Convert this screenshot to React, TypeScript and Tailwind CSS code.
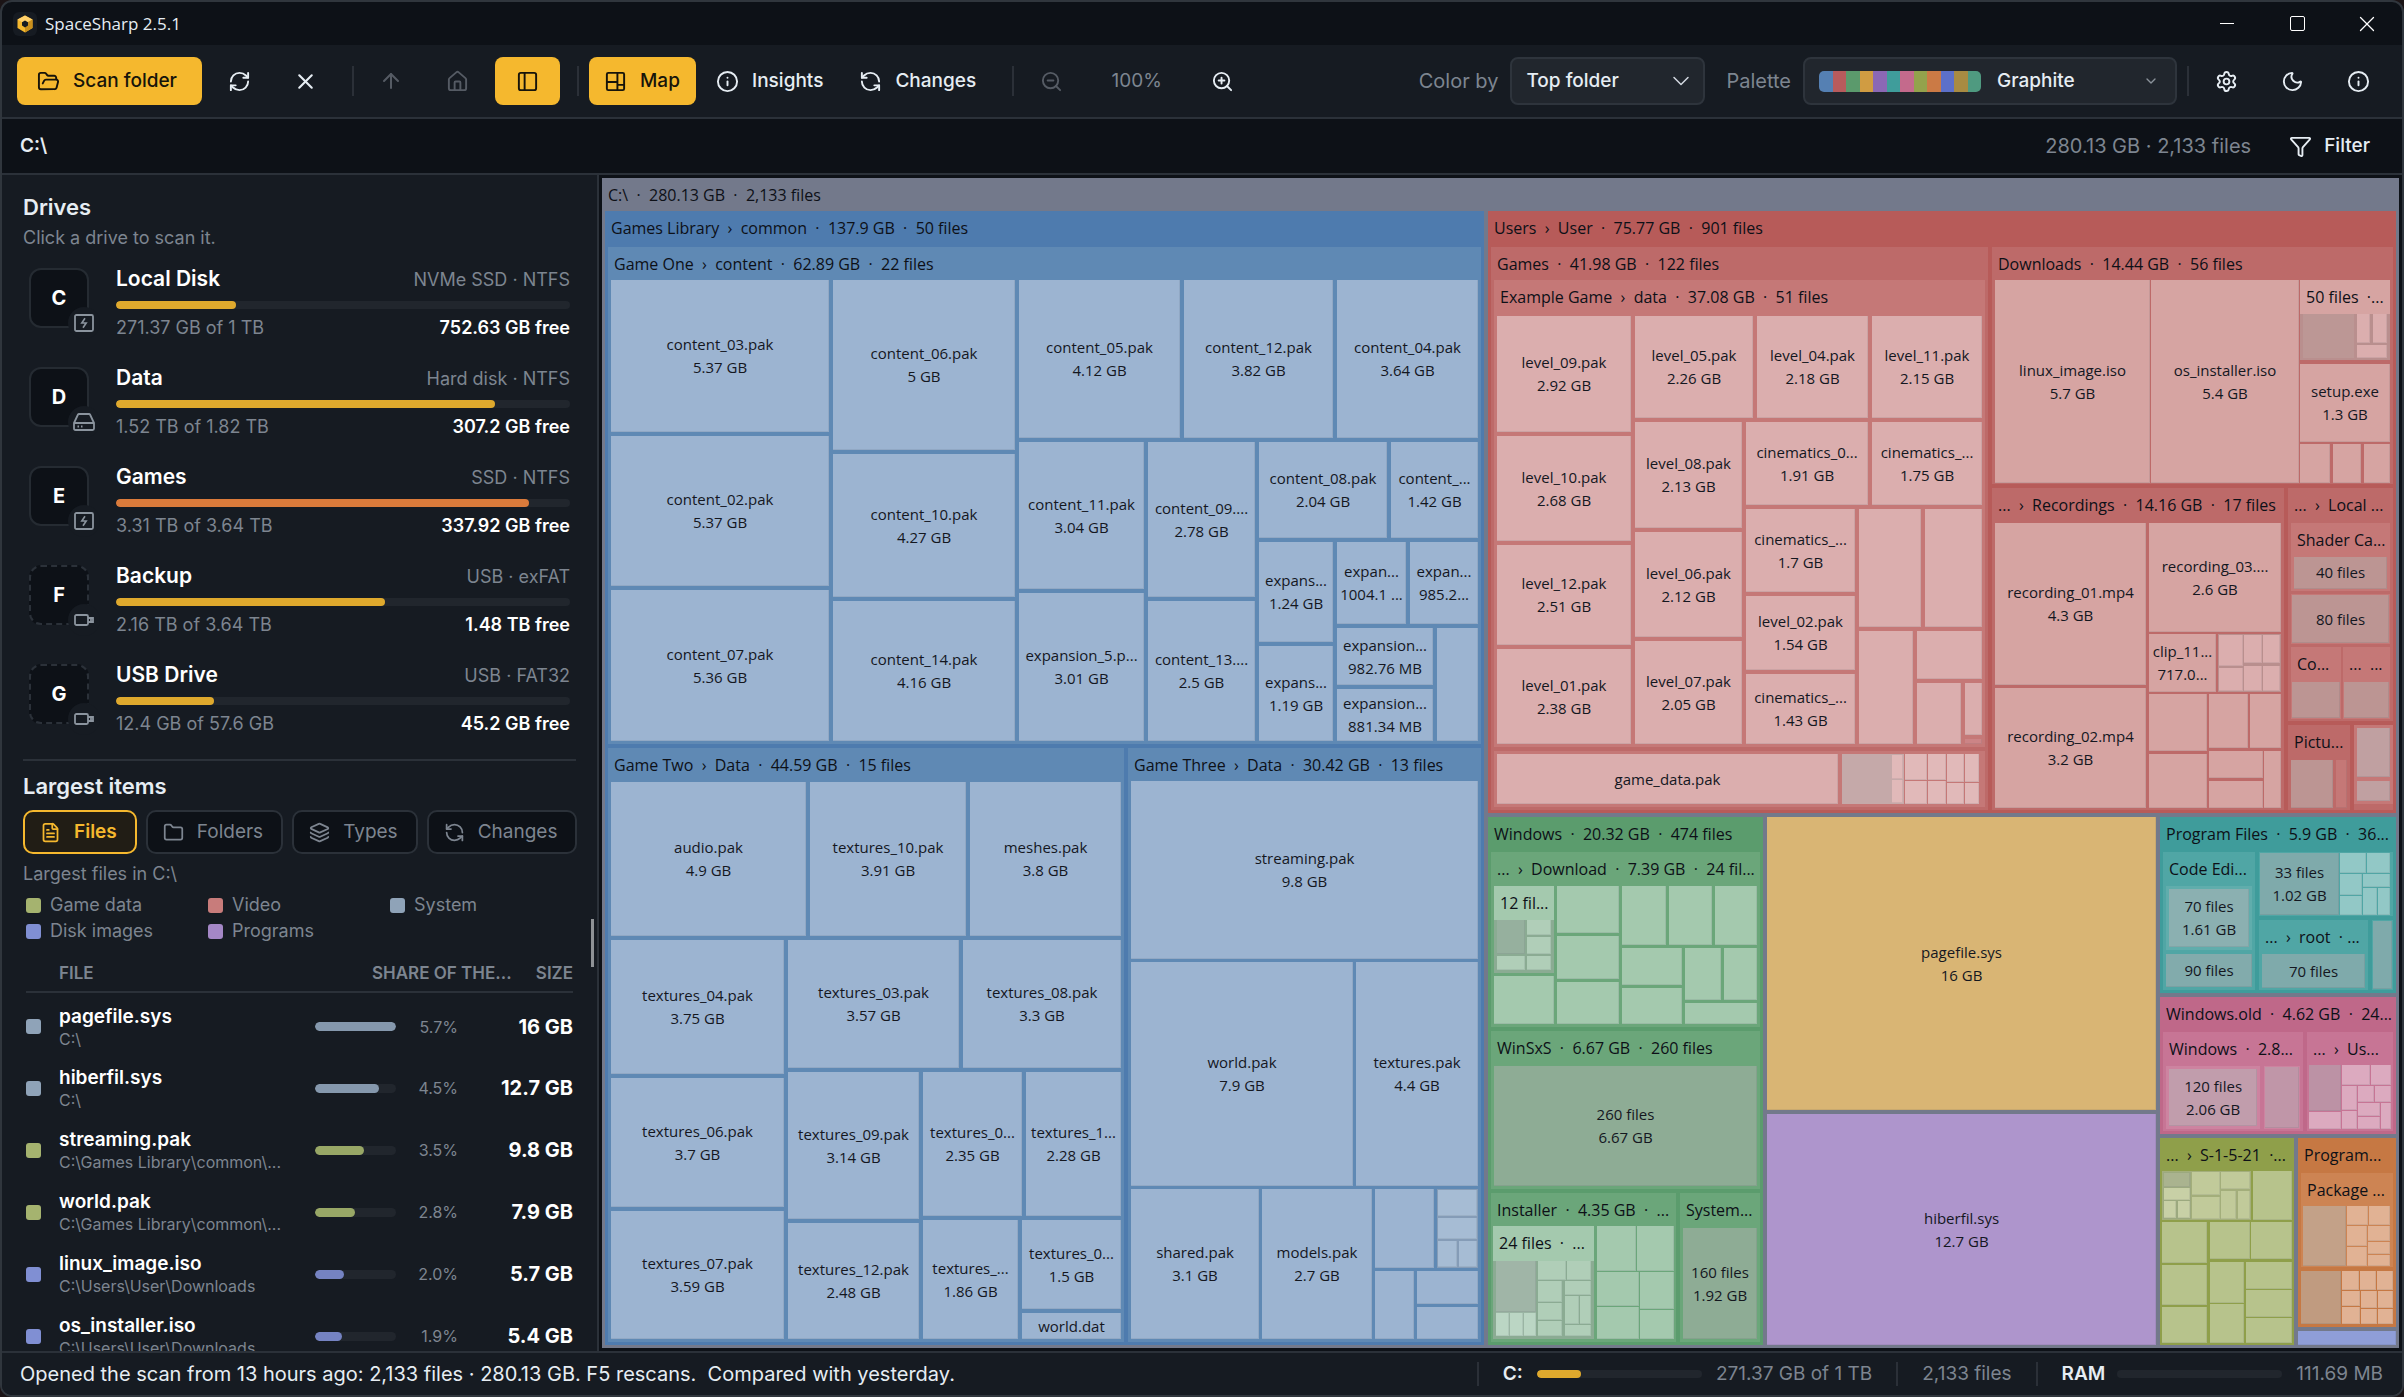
import type { ReactNode } from "react";
import {
  ArrowUp,
  ChevronDown,
  FileText,
  Folder,
  FolderOpen,
  Funnel,
  House,
  Info,
  Layers,
  Moon,
  RefreshCcw,
  RefreshCw,
  Settings,
  X,
  ZoomIn,
  ZoomOut,
} from "lucide-react";

/* ---------- treemap building blocks ---------- */

type Item = [number, ReactNode];

const GAPS: Record<number, string> = {
  0: "gap-0",
  1: "gap-px",
  2: "gap-0.5",
  3: "gap-[3px]",
  4: "gap-1",
};

function split(direction: string, gap: number, items: Item[]) {
  return (
    <div className={`flex min-h-0 min-w-0 flex-1 ${direction} ${GAPS[gap]}`}>
      {items.map(([weight, node], i) => (
        <div key={i} className="flex min-h-0 min-w-0" style={{ flex: `${weight} 1 0px` }}>
          {node}
        </div>
      ))}
    </div>
  );
}

const row = (gap: number, ...items: Item[]) => split("flex-row", gap, items);
const col = (gap: number, ...items: Item[]) => split("flex-col", gap, items);

function leaf(color: string, name?: string, size?: string) {
  return (
    <div
      className={`flex min-h-0 min-w-0 flex-1 flex-col items-center justify-center overflow-hidden whitespace-nowrap text-[15px] leading-[23px] text-[#14171f] shadow-[inset_-1px_-1px_0_rgba(40,50,70,0.09)] ${color}`}
    >
      {name && <span>{name}</span>}
      {size && <span>{size}</span>}
    </div>
  );
}

const rowOf = (gap: number, color: string, ...sizes: number[]) =>
  row(gap, ...sizes.map((s): Item => [s, leaf(color)]));
const colOf = (gap: number, color: string, ...sizes: number[]) =>
  col(gap, ...sizes.map((s): Item => [s, leaf(color)]));

function box(color: string, pad: string, child: ReactNode) {
  return <div className={`flex min-h-0 min-w-0 flex-1 ${color} ${pad}`}>{child}</div>;
}

function group(color: string, title: string, header: string, child: ReactNode, pad = "px-[3px] pb-[3px]") {
  return (
    <div className={`flex min-h-0 min-w-0 flex-1 flex-col ${color}`}>
      <div
        className={`shrink-0 overflow-hidden whitespace-pre pl-1.5 pt-[7px] text-base leading-5 text-[#0d1017] ${header}`}
      >
        {title}
      </div>
      <div className={`flex min-h-0 flex-1 ${pad}`}>{child}</div>
    </div>
  );
}

const H33 = "h-[33px]";
const H34 = "h-[34px]";
const H35 = "h-[35px]";
const H36 = "h-[36px]";

/* ---------- treemap data ---------- */

const BLUE = "bg-[#9cb4d1]";
const BLUE_1 = "bg-[#4e7bae]";
const BLUE_2 = "bg-[#5f89b4]";

const gameOne = group(
  BLUE_2,
  "Game One  ›  content  ·  62.89 GB  ·  22 files",
  H33,
  row(
    4,
    [
      218,
      col(
        4,
        [152, leaf(BLUE, "content_03.pak", "5.37 GB")],
        [150, leaf(BLUE, "content_02.pak", "5.37 GB")],
        [151, leaf(BLUE, "content_07.pak", "5.36 GB")],
      ),
    ],
    [
      182,
      col(
        4,
        [170, leaf(BLUE, "content_06.pak", "5 GB")],
        [143, leaf(BLUE, "content_10.pak", "4.27 GB")],
        [140, leaf(BLUE, "content_14.pak", "4.16 GB")],
      ),
    ],
    [
      459,
      col(
        4,
        [
          158,
          row(
            4,
            [161, leaf(BLUE, "content_05.pak", "4.12 GB")],
            [149, leaf(BLUE, "content_12.pak", "3.82 GB")],
            [141, leaf(BLUE, "content_04.pak", "3.64 GB")],
          ),
        ],
        [
          299,
          row(
            4,
            [
              125,
              col(
                4,
                [147, leaf(BLUE, "content_11.pak", "3.04 GB")],
                [148, leaf(BLUE, "expansion_5.p...", "3.01 GB")],
              ),
            ],
            [
              107,
              col(
                4,
                [155, leaf(BLUE, "content_09....", "2.78 GB")],
                [140, leaf(BLUE, "content_13....", "2.5 GB")],
              ),
            ],
            [
              219,
              col(
                4,
                [
                  96,
                  row(
                    4,
                    [128, leaf(BLUE, "content_08.pak", "2.04 GB")],
                    [87, leaf(BLUE, "content_...", "1.42 GB")],
                  ),
                ],
                [
                  199,
                  row(
                    4,
                    [
                      74,
                      col(
                        4,
                        [100, leaf(BLUE, "expans...", "1.24 GB")],
                        [95, leaf(BLUE, "expans...", "1.19 GB")],
                      ),
                    ],
                    [
                      141,
                      col(
                        4,
                        [
                          82,
                          row(
                            4,
                            [69, leaf(BLUE, "expan...", "1004.1 ...")],
                            [68, leaf(BLUE, "expan...", "985.2...")],
                          ),
                        ],
                        [
                          113,
                          row(
                            4,
                            [
                              96,
                              col(
                                4,
                                [57, leaf(BLUE, "expansion...", "982.76 MB")],
                                [52, leaf(BLUE, "expansion...", "881.34 MB")],
                              ),
                            ],
                            [41, leaf(BLUE)],
                          ),
                        ],
                      ),
                    ],
                  ),
                ],
              ),
            ],
          ),
        ],
      ),
    ],
  ),
);

const gameTwo = group(
  BLUE_2,
  "Game Two  ›  Data  ·  44.59 GB  ·  15 files",
  H34,
  col(
    4,
    [
      154,
      row(
        4,
        [195, leaf(BLUE, "audio.pak", "4.9 GB")],
        [156, leaf(BLUE, "textures_10.pak", "3.91 GB")],
        [151, leaf(BLUE, "meshes.pak", "3.8 GB")],
      ),
    ],
    [
      399,
      row(
        4,
        [
          173,
          col(
            4,
            [134, leaf(BLUE, "textures_04.pak", "3.75 GB")],
            [129, leaf(BLUE, "textures_06.pak", "3.7 GB")],
            [128, leaf(BLUE, "textures_07.pak", "3.59 GB")],
          ),
        ],
        [
          333,
          col(
            4,
            [
              128,
              row(
                4,
                [171, leaf(BLUE, "textures_03.pak", "3.57 GB")],
                [158, leaf(BLUE, "textures_08.pak", "3.3 GB")],
              ),
            ],
            [
              267,
              row(
                4,
                [
                  131,
                  col(
                    4,
                    [147, leaf(BLUE, "textures_09.pak", "3.14 GB")],
                    [116, leaf(BLUE, "textures_12.pak", "2.48 GB")],
                  ),
                ],
                [
                  198,
                  col(
                    4,
                    [
                      144,
                      row(
                        4,
                        [99, leaf(BLUE, "textures_0...", "2.35 GB")],
                        [95, leaf(BLUE, "textures_1...", "2.28 GB")],
                      ),
                    ],
                    [
                      119,
                      row(
                        4,
                        [95, leaf(BLUE, "textures_...", "1.86 GB")],
                        [
                          99,
                          col(
                            4,
                            [89, leaf(BLUE, "textures_0...", "1.5 GB")],
                            [26, leaf(BLUE, "world.dat")],
                          ),
                        ],
                      ),
                    ],
                  ),
                ],
              ),
            ],
          ),
        ],
      ),
    ],
  ),
);

const BLUE_CELL = "bg-[#a6bcd4]";

const gameThree = group(
  BLUE_2,
  "Game Three  ›  Data  ·  30.42 GB  ·  13 files",
  H33,
  col(
    3,
    [178, leaf(BLUE, "streaming.pak", "9.8 GB")],
    [
      224,
      row(3, [222, leaf(BLUE, "world.pak", "7.9 GB")], [122, leaf(BLUE, "textures.pak", "4.4 GB")]),
    ],
    [
      150,
      row(
        3,
        [128, leaf(BLUE, "shared.pak", "3.1 GB")],
        [110, leaf(BLUE, "models.pak", "2.7 GB")],
        [
          103,
          col(
            3,
            [
              79,
              row(
                3,
                [59, leaf(BLUE)],
                [
                  41,
                  box(
                    "bg-[#859cb7]",
                    "p-px",
                    col(
                      2,
                      [26, leaf(BLUE_CELL)],
                      [20, leaf(BLUE_CELL)],
                      [26, rowOf(2, BLUE_CELL, 20, 18)],
                    ),
                  ),
                ],
              ),
            ],
            [68, row(3, [39, leaf(BLUE)], [61, colOf(3, BLUE, 33, 32)])],
          ),
        ],
      ),
    ],
  ),
);

const gamesLibrary = group(
  BLUE_1,
  "Games Library  ›  common  ·  137.9 GB  ·  50 files",
  H36,
  col(4, [497, gameOne], [594, row(4, [516, gameTwo], [353, gameThree])]),
);

const RED_1 = "bg-[#b75b59]";
const RED_2 = "bg-[#bd6a69]";
const RED_3 = "bg-[#c57877]";
const RED = "bg-[#d6a4a2]";
const RED_LIGHT = "bg-[#dbaeae]";
const RED_CELL = "bg-[#e1b9b9]";
const RED_GRAY = "bg-[#bc9593]";

const exampleGame = group(
  RED_3,
  "Example Game  ›  data  ·  37.08 GB  ·  51 files",
  H36,
  row(
    4,
    [
      134,
      col(
        4,
        [116, leaf(RED_LIGHT, "level_09.pak", "2.92 GB")],
        [105, leaf(RED_LIGHT, "level_10.pak", "2.68 GB")],
        [100, leaf(RED_LIGHT, "level_12.pak", "2.51 GB")],
        [95, leaf(RED_LIGHT, "level_01.pak", "2.38 GB")],
      ),
    ],
    [
      347,
      col(
        4,
        [
          102,
          row(
            4,
            [118, leaf(RED_LIGHT, "level_05.pak", "2.26 GB")],
            [111, leaf(RED_LIGHT, "level_04.pak", "2.18 GB")],
            [110, leaf(RED_LIGHT, "level_11.pak", "2.15 GB")],
          ),
        ],
        [
          322,
          row(
            4,
            [
              107,
              col(
                4,
                [106, leaf(RED_LIGHT, "level_08.pak", "2.13 GB")],
                [105, leaf(RED_LIGHT, "level_06.pak", "2.12 GB")],
                [103, leaf(RED_LIGHT, "level_07.pak", "2.05 GB")],
              ),
            ],
            [
              236,
              col(
                4,
                [
                  83,
                  row(
                    4,
                    [122, leaf(RED_LIGHT, "cinematics_0...", "1.91 GB")],
                    [110, leaf(RED_LIGHT, "cinematics_...", "1.75 GB")],
                  ),
                ],
                [
                  235,
                  row(
                    4,
                    [
                      109,
                      col(
                        4,
                        [83, leaf(RED_LIGHT, "cinematics_...", "1.7 GB")],
                        [74, leaf(RED_LIGHT, "level_02.pak", "1.54 GB")],
                        [70, leaf(RED_LIGHT, "cinematics_...", "1.43 GB")],
                      ),
                    ],
                    [
                      123,
                      col(
                        4,
                        [118, rowOf(4, RED_LIGHT, 62, 57)],
                        [
                          113,
                          row(
                            4,
                            [54, leaf(RED_LIGHT)],
                            [
                              65,
                              col(
                                4,
                                [48, leaf(RED_LIGHT)],
                                [
                                  61,
                                  row(
                                    4,
                                    [44, leaf(RED_LIGHT)],
                                    [17, col(4, [52, leaf(RED_LIGHT)], [5, leaf("bg-[#cc8486]")])],
                                  ),
                                ],
                              ),
                            ],
                          ),
                        ],
                      ),
                    ],
                  ),
                ],
              ),
            ],
          ),
        ],
      ),
    ],
  ),
);

const userGames = group(
  RED_2,
  "Games  ·  41.98 GB  ·  122 files",
  H33,
  col(
    4,
    [467, exampleGame],
    [
      56,
      box(
        RED_3,
        "py-[3px] pl-[3px] pr-1.5",
        row(
          4,
          [341, leaf(RED_LIGHT, "game_data.pak")],
          [
            137,
            row(
              1,
              [62, box("bg-[#c5a9a9]", "p-px", row(1, [49, null], [11, colOf(1, RED_CELL, 1, 1)]))],
              [22, colOf(1, RED_CELL, 25, 23)],
              [18, colOf(1, RED_CELL, 25, 23)],
              [17, colOf(1, RED_CELL, 27, 21)],
              [14, colOf(1, RED_CELL, 27, 21)],
            ),
          ],
        ),
      ),
    ],
  ),
);

const downloads = group(
  RED_2,
  "Downloads  ·  14.44 GB  ·  56 files",
  H33,
  row(
    1,
    [155, leaf(RED, "linux_image.iso", "5.7 GB")],
    [148, leaf(RED, "os_installer.iso", "5.4 GB")],
    [
      90,
      col(
        2,
        [
          80,
          group(
            RED,
            "50 files  ·...",
            H34,
            box(
              "bg-[#b98f8e]",
              "px-[3px] pb-0.5",
              row(
                3,
                [52, box("bg-[#bc9795]", "", null)],
                [31, col(2, [28, rowOf(3, RED_LIGHT, 14, 14)], [12, leaf(RED_LIGHT)])],
              ),
            ),
            "p-0",
          ),
        ],
        [80, box(RED_2, "pt-0.5", leaf(RED, "setup.exe", "1.3 GB"))],
        [39, rowOf(3, RED, 30, 28, 26)],
      ),
    ],
  ),
  "px-[3px] pb-px",
);

const recordings = group(
  RED_2,
  "...  ›  Recordings  ·  14.16 GB  ·  17 files",
  H35,
  row(
    3,
    [
      151,
      col(
        3,
        [162, leaf(RED, "recording_01.mp4", "4.3 GB")],
        [120, leaf(RED, "recording_02.mp4", "3.2 GB")],
      ),
    ],
    [
      132,
      col(
        2,
        [109, leaf(RED, "recording_03....", "2.6 GB")],
        [
          58,
          row(
            2,
            [67, leaf(RED, "clip_11...", "717.0...")],
            [
              63,
              box(
                "bg-[#b98f8e]",
                "p-px",
                row(
                  1,
                  [24, colOf(2, RED_LIGHT, 30, 23)],
                  [18, colOf(3, RED_LIGHT, 27, 25)],
                  [17, colOf(3, RED_LIGHT, 27, 25)],
                ),
              ),
            ],
          ),
        ],
        [
          114,
          row(
            2,
            [58, colOf(3, RED, 57, 54)],
            [
              72,
              col(
                3,
                [54, rowOf(2, RED, 39, 31)],
                [57, row(1, [54, colOf(3, RED, 27, 27)], [17, leaf(RED)])],
              ),
            ],
          ),
        ],
      ),
    ],
  ),
  "px-[3px] pb-0.5",
);

const localData = group(
  RED_2,
  "...  ›  Local ...",
  H35,
  col(
    3,
    [68, group(RED_3, "Shader Ca...", H34, leaf(RED_GRAY, "40 files"), "px-[3px] pb-0.5")],
    [51, box(RED_3, "p-px", leaf(RED_GRAY, "80 files"))],
    [
      72,
      row(
        2,
        [50, group(RED_3, "Co...", H35, leaf(RED_GRAY), "px-px pb-px")],
        [47, group(RED_3, "...  ...", H35, leaf(RED_GRAY), "px-px pb-px")],
      ),
    ],
  ),
  "px-[3px] pb-0.5",
);

const pictures = row(
  4,
  [
    62,
    group(
      RED_2,
      "Pictu...",
      H35,
      row(3, [42, leaf(RED_GRAY)], [11, leaf(RED_3)]),
      "px-[3px] pb-0.5",
    ),
  ],
  [
    39,
    box(
      RED_2,
      "pb-1.5",
      box(RED_3, "p-[3px]", col(4, [48, leaf("bg-[#c0a0a1]")], [19, leaf("bg-[#c0a0a1]")])),
    ),
  ],
);

const users = group(
  RED_1,
  "Users  ›  User  ·  75.77 GB  ·  901 files",
  H36,
  row(
    4,
    [497, userGames],
    [
      401,
      col(
        4,
        [237, downloads],
        [322, row(4, [292, recordings], [105, col(4, [233, localData], [85, pictures])])],
      ),
    ],
  ),
);

const GREEN_1 = "bg-[#5b9c6d]";
const GREEN_2 = "bg-[#6ba67a]";
const GREEN = "bg-[#a4c9ae]";
const GREEN_CELL = "bg-[#b0ceb8]";
const GREEN_GRAY = "bg-[#8eac95]";
const GREEN_BED = "bg-[#8bab93]";

const winDownload = group(
  GREEN_2,
  "...  ›  Download  ·  7.39 GB  ·  24 fil...",
  H34,
  row(
    3,
    [
      60,
      col(
        3,
        [
          87,
          group(
            GREEN,
            "12 fil...",
            H34,
            box(
              GREEN_BED,
              "px-[3px] pb-[3px]",
              row(
                2,
                [29, col(2, [33, leaf("bg-[#96b09e]")], [14, leaf(GREEN_CELL)])],
                [24, colOf(2, GREEN_CELL, 15, 16, 14)],
              ),
            ),
            "p-0",
          ),
        ],
        [48, leaf(GREEN)],
      ),
    ],
    [62, colOf(3, GREEN, 47, 43, 42)],
    [
      135,
      col(
        3,
        [59, rowOf(3, GREEN, 44, 43, 42)],
        [
          76,
          row(
            3,
            [60, colOf(3, GREEN, 37, 36)],
            [72, col(3, [52, rowOf(3, GREEN, 36, 33)], [21, leaf(GREEN)])],
          ),
        ],
      ),
    ],
  ),
);

const installer = group(
  GREEN_2,
  "Installer  ·  4.35 GB  ·  ...",
  H33,
  row(
    3,
    [
      102,
      group(
        GREEN,
        "24 files  ·  ...",
        H35,
        box(
          GREEN_BED,
          "px-[3px] pb-[3px]",
          row(
            2,
            [
              40,
              box(
                "bg-[#9ab5a3]",
                "",
                col(1, [50, leaf("bg-[#a0b5a7]")], [22, rowOf(1, "bg-[#bbd6c4]", 12, 12, 11)]),
              ),
            ],
            [
              54,
              col(
                1,
                [19, rowOf(1, GREEN_CELL, 28, 25)],
                [
                  54,
                  row(
                    3,
                    [24, colOf(1, GREEN_CELL, 20, 17, 15)],
                    [
                      27,
                      col(
                        1,
                        [14, leaf(GREEN_CELL)],
                        [28, rowOf(1, GREEN_CELL, 14, 12)],
                        [11, leaf(GREEN_CELL)],
                      ),
                    ],
                  ),
                ],
              ),
            ],
          ),
        ),
        "p-0",
      ),
    ],
    [
      77,
      col(
        1,
        [45, rowOf(1, GREEN, 39, 37)],
        [66, row(1, [42, colOf(1, GREEN, 34, 32)], [34, colOf(1, GREEN, 37, 29)])],
      ),
    ],
  ),
  "px-0.5 pb-[3px]",
);

const windows = group(
  GREEN_1,
  "Windows  ·  20.32 GB  ·  474 files",
  H35,
  col(
    4,
    [175, winDownload],
    [158, group(GREEN_2, "WinSxS  ·  6.67 GB  ·  260 files", H35, leaf(GREEN_GRAY, "260 files", "6.67 GB"))],
    [
      149,
      row(
        4,
        [185, installer],
        [80, group(GREEN_2, "System...", H35, leaf(GREEN_GRAY, "160 files", "1.92 GB"))],
      ),
    ],
  ),
);

const TEAL_2 = "bg-[#50a6a5]";
const TEAL = "bg-[#92c8c6]";
const TEAL_GRAY = "bg-[#7faaab]";

const programFiles = group(
  "bg-[#3f9c9b]",
  "Program Files  ·  5.9 GB  ·  36...",
  H35,
  row(
    4,
    [
      92,
      group(
        TEAL_2,
        "Code Edi...",
        H34,
        col(
          4,
          [64, box("bg-[#60adac]", "p-[3px]", leaf("bg-[#8bb0b1]", "70 files", "1.61 GB"))],
          [33, leaf("bg-[#82abac]", "90 files")],
        ),
      ),
    ],
    [
      134,
      col(
        4,
        [
          64,
          box(
            TEAL_2,
            "p-px pr-[3px]",
            row(
              1,
              [79, leaf(TEAL_GRAY, "33 files", "1.02 GB")],
              [
                50,
                col(
                  1,
                  [20, rowOf(1, TEAL, 26, 23)],
                  [
                    41,
                    row(
                      1,
                      [22, colOf(1, TEAL, 21, 19)],
                      [27, col(1, [13, leaf(TEAL)], [27, rowOf(1, TEAL, 14, 12)])],
                    ),
                  ],
                ),
              ],
            ),
          ),
        ],
        [
          69,
          row(
            4,
            [109, group(TEAL_2, "...  ›  root  · ...", H34, leaf(TEAL_GRAY, "70 files"), "px-[3px] pb-0.5")],
            [21, box(TEAL_2, "p-px", leaf(TEAL_GRAY))],
          ),
        ],
      ),
    ],
  ),
);

const PINK_2 = "bg-[#c77595]";
const PINK = "bg-[#dcaabf]";

const windowsOld = group(
  "bg-[#bf6889]",
  "Windows.old  ·  4.62 GB  ·  24...",
  H35,
  row(
    4,
    [
      140,
      group(
        PINK_2,
        "Windows  ·  2.8...",
        H34,
        row(
          4,
          [95, box("bg-[#cd83a0]", "p-[3px]", leaf("bg-[#c19dac]", "120 files", "2.06 GB"))],
          [36, box("bg-[#cd83a0]", "p-px", leaf("bg-[#c096a8]"))],
        ),
        "px-[3px] pb-0.5",
      ),
    ],
    [
      86,
      group(
        PINK_2,
        "...  ›  Us...",
        H33,
        row(
          1,
          [32, col(1, [47, leaf("bg-[#bc92a5]")], [17, leaf(PINK)])],
          [
            49,
            col(
              1,
              [20, rowOf(1, PINK, 28, 20)],
              [
                44,
                row(
                  1,
                  [15, colOf(1, PINK, 25, 18)],
                  [
                    33,
                    col(
                      1,
                      [17, rowOf(1, PINK, 16, 17)],
                      [26, row(1, [22, colOf(1, PINK, 13, 12)], [10, leaf(PINK)])],
                    ),
                  ],
                ),
              ],
            ),
          ],
        ),
        "px-0.5 pb-0.5",
      ),
    ],
  ),
);

const OLIVE = "bg-[#b7c38c]";
const OLIVE_CELL = "bg-[#c1ca9a]";

const recycle = group(
  "bg-[#8f9f4a]",
  "...  ›  S-1-5-21  ·...",
  H33,
  col(
    2,
    [
      49,
      row(
        2,
        [
          90,
          box(
            "bg-[#a3ae7b]",
            "p-px",
            row(
              1,
              [
                28,
                box(
                  "bg-[#9ca97f]",
                  "p-px",
                  col(
                    1,
                    [14, leaf("bg-[#aab38f]")],
                    [11, leaf("bg-[#c8d0a6]")],
                    [17, rowOf(2, "bg-[#c8d0a6]", 11, 11)],
                  ),
                ),
              ],
              [28, colOf(2, OLIVE_CELL, 23, 22)],
              [30, col(2, [17, leaf(OLIVE_CELL)], [28, rowOf(2, OLIVE_CELL, 16, 13)])],
            ),
          ),
        ],
        [39, leaf(OLIVE)],
      ),
    ],
    [
      120,
      row(
        3,
        [45, colOf(2, OLIVE, 41, 40, 36)],
        [
          83,
          col(
            3,
            [36, rowOf(1, OLIVE, 41, 41)],
            [80, row(2, [35, colOf(1, OLIVE, 40, 38)], [46, colOf(1, OLIVE, 27, 26, 25)])],
          ),
        ],
      ),
    ],
  ),
  "px-0.5 pb-0.5",
);

const ORANGE_2 = "bg-[#cd8453]";
const ORANGE = "bg-[#e1b294]";

const programData = group(
  "bg-[#c67843]",
  "Program...",
  H35,
  col(
    4,
    [
      94,
      group(
        ORANGE_2,
        "Package ...",
        H33,
        row(
          1,
          [42, leaf("bg-[#c3a188]")],
          [
            43,
            col(
              1,
              [19, rowOf(1, ORANGE, 21, 21)],
              [40, row(1, [20, colOf(1, ORANGE, 20, 20)], [22, colOf(1, ORANGE, 15, 13, 11)])],
            ),
          ],
        ),
        "pl-0.5 pr-[3px] pb-px",
      ),
    ],
    [
      53,
      row(
        1,
        [40, leaf("bg-[#c09b80]")],
        [
          51,
          col(
            1,
            [19, rowOf(1, ORANGE, 17, 15, 16)],
            [
              33,
              row(
                1,
                [18, colOf(1, ORANGE, 15, 17)],
                [16, colOf(1, ORANGE, 17, 15)],
                [15, colOf(1, ORANGE, 17, 15)],
              ),
            ],
          ),
        ],
      ),
    ],
  ),
);

const treemap = group(
  "bg-[#73798b]",
  "C:\\  ·  280.13 GB  ·  2,133 files",
  H33,
  row(
    4,
    [879, gamesLibrary],
    [
      908,
      col(
        4,
        [602, users],
        [
          528,
          row(
            4,
            [275, windows],
            [
              389,
              col(
                4,
                [293, leaf("bg-[#d9b574]", "pagefile.sys", "16 GB")],
                [231, leaf("bg-[#ae95cc]", "hiberfil.sys", "12.7 GB")],
              ),
            ],
            [
              236,
              col(
                4,
                [176, programFiles],
                [137, windowsOld],
                [
                  207,
                  row(4, [134, recycle], [98, col(4, [189, programData], [14, leaf("bg-[#8f9ed8]")])]),
                ],
              ),
            ],
          ),
        ],
      ),
    ],
  ),
);

/* ---------- window chrome ---------- */

function Logo() {
  return (
    <span className="flex size-6 items-center justify-center rounded-md bg-[#161b22]">
      <svg viewBox="0 0 16 18" className="h-[18px] w-4" aria-hidden="true">
        <path d="M8 0.5 15.5 4.5V13L8 17.5 0.5 13V4.5Z" fill="#f5b82e" />
        <path d="M8 0.5 15.5 4.5 8 8.8 0.5 4.5Z" fill="#ffd06a" />
        <path d="M15.5 4.5V13L8 17.5V8.8Z" fill="#c98f1c" />
        <path d="M8 5.6 11 7.3V10.6L8 12.4 5 10.6V7.3Z" fill="#161b22" />
      </svg>
    </span>
  );
}

function TitleBar() {
  return (
    <header className="flex h-[43px] shrink-0 items-center pl-[11px]">
      <Logo />
      <h1 className="ml-2 font-['Open_Sans',sans-serif] text-[17px] text-[#e6edf3]">SpaceSharp 2.5.1</h1>
      <div className="ml-auto flex text-white">
        <button aria-label="Minimize" className="flex h-10 w-[70px] items-center justify-center">
          <span className="h-px w-3.5 bg-white" />
        </button>
        <button aria-label="Maximize" className="flex h-10 w-[70px] items-center justify-center">
          <span className="size-[15px] rounded-xs border border-white" />
        </button>
        <button aria-label="Close" className="flex h-10 w-[70px] items-center justify-center">
          <X size={26} strokeWidth={1.2} />
        </button>
      </div>
    </header>
  );
}

function MapIcon() {
  return (
    <svg
      viewBox="0 0 24 24"
      className="size-[23px]"
      fill="none"
      stroke="currentColor"
      strokeWidth="2"
      strokeLinejoin="round"
      aria-hidden="true"
    >
      <rect x="3" y="3" width="18" height="18" rx="1.5" />
      <path d="M14 3v18M3 12.5h11M14 15.5h7" />
    </svg>
  );
}

function PanelIcon() {
  return (
    <svg
      viewBox="0 0 24 24"
      className="size-[23px]"
      fill="none"
      stroke="currentColor"
      strokeWidth="2"
      strokeLinejoin="round"
      aria-hidden="true"
    >
      <rect x="3" y="3" width="18" height="18" rx="2" />
      <path d="M9 3v18" />
    </svg>
  );
}

function IconButton({ label, muted, children }: { label: string; muted?: boolean; children: ReactNode }) {
  return (
    <button
      aria-label={label}
      className={`flex h-12 w-[66px] shrink-0 items-center justify-center ${muted ? "text-[#555b64]" : "text-[#e6edf3]"}`}
    >
      {children}
    </button>
  );
}

function Divider({ className }: { className: string }) {
  return <span className={`w-0.5 shrink-0 bg-[#2b3038] ${className}`} />;
}

const SWATCHES = [
  "bg-[#5580b3]",
  "bg-[#b85b5c]",
  "bg-[#5b9a6c]",
  "bg-[#d09c42]",
  "bg-[#8b68b5]",
  "bg-[#3f9d9b]",
  "bg-[#c46a8c]",
  "bg-[#93a24c]",
  "bg-[#cb7a45]",
  "bg-[#5c70c9]",
  "bg-[#a88b42]",
  "bg-[#4f9a80]",
];

function Toolbar() {
  return (
    <div className="flex h-[74px] shrink-0 items-center border-b-2 border-[#2b3139] bg-[#161b22] pl-[15px] pr-[11px] text-[19px] font-medium text-[#e6edf3]">
      <button className="flex h-12 w-[185px] shrink-0 items-center gap-[13px] rounded-lg bg-[#f5b82e] pl-5 text-[#17140a]">
        <FolderOpen size={23} />
        Scan folder
      </button>
      <span className="w-1" />
      <IconButton label="Rescan">
        <RefreshCw size={23} />
      </IconButton>
      <IconButton label="Cancel">
        <X size={25} />
      </IconButton>
      <Divider className="ml-3.5 mr-1 h-[30px]" />
      <IconButton label="Up" muted>
        <ArrowUp size={24} />
      </IconButton>
      <IconButton label="Home" muted>
        <House size={23} />
      </IconButton>
      <button
        aria-label="Toggle sidebar"
        className="ml-[5px] flex h-12 w-[65px] shrink-0 items-center justify-center rounded-lg bg-[#f5b82e] text-[#17140a]"
      >
        <PanelIcon />
      </button>
      <Divider className="ml-[17px] mr-2.5 h-[30px]" />
      <button className="flex h-12 w-[107px] shrink-0 items-center gap-[13px] rounded-lg bg-[#f5b82e] pl-[15px] text-[#17140a]">
        <MapIcon />
        Map
      </button>
      <button className="ml-1 flex h-12 items-center gap-[13px] px-4">
        <Info size={23} />
        Insights
      </button>
      <button className="ml-1 flex h-12 items-center gap-[13px] px-4">
        <RefreshCcw size={23} />
        Changes
      </button>
      <Divider className="ml-5 mr-1 h-[30px]" />
      <IconButton label="Zoom out" muted>
        <ZoomOut size={23} />
      </IconButton>
      <span className="w-[105px] text-center font-normal text-[#7d8590]">100%</span>
      <IconButton label="Zoom in">
        <ZoomIn size={23} />
      </IconButton>

      <label htmlFor="color-by" className="ml-auto text-xl font-normal text-[#7d8590]">
        Color by
      </label>
      <div className="relative ml-3 w-[195px] shrink-0">
        <select
          id="color-by"
          className="h-12 w-full appearance-none rounded-lg border-2 border-[#2e343c] bg-[#21262d] pl-3.5 text-[#e6edf3]"
        >
          <option>Top folder</option>
        </select>
        <ChevronDown
          size={28}
          strokeWidth={1.3}
          className="pointer-events-none absolute right-2.5 top-2.5 text-[#d0d6dd]"
        />
      </div>
      <span className="ml-[21px] text-xl font-normal text-[#7d8590]">Palette</span>
      <button className="ml-3 flex h-12 w-[374px] shrink-0 items-center rounded-lg border-2 border-[#2e343c] bg-[#21262d] px-3.5">
        <span className="flex h-[21px] w-[162px] overflow-hidden rounded-[5px]">
          {SWATCHES.map((c) => (
            <span key={c} className={`flex-1 ${c}`} />
          ))}
        </span>
        <span className="ml-4">Graphite</span>
        <ChevronDown size={16} className="ml-auto mr-0.5 text-[#8b929b]" />
      </button>
      <Divider className="ml-2.5 mr-1 h-[30px]" />
      <IconButton label="Settings">
        <Settings size={23} />
      </IconButton>
      <IconButton label="Theme">
        <Moon size={23} />
      </IconButton>
      <IconButton label="About">
        <Info size={23} />
      </IconButton>
    </div>
  );
}

function PathBar() {
  return (
    <div className="flex h-14 shrink-0 items-center border-b-2 border-[#2b3139] pl-[18px] pr-8 text-[19px] text-[#e6edf3]">
      <span className="font-semibold">C:\</span>
      <span className="ml-auto text-xl text-[#7d8590]">280.13 GB · 2,133 files</span>
      <button className="ml-[38px] flex items-center gap-3 font-medium">
        <Funnel size={23} />
        Filter
      </button>
    </div>
  );
}

/* ---------- sidebar ---------- */

function SsdIcon() {
  return (
    <svg viewBox="0 0 20 18" className="h-[18px] w-5" fill="none" stroke="#8b949e" strokeWidth="1.8" aria-hidden="true">
      <rect x="1" y="1" width="18" height="16" rx="1.5" />
      <path d="M11 4.2 7.8 9h4.4L9 13.8" strokeWidth="1.6" />
    </svg>
  );
}

function HddIcon() {
  return (
    <svg
      viewBox="0 0 22 18"
      className="h-[18px] w-[22px]"
      fill="none"
      stroke="#8b949e"
      strokeWidth="1.8"
      strokeLinejoin="round"
      aria-hidden="true"
    >
      <path d="M1 10 5 1.5Q5.3 1 6 1h10q.7 0 1 .5L21 10v5.5q0 1.5-1.5 1.5h-17Q1 17 1 15.5ZM1 10h20" />
      <path d="M4.5 13.5H6M8 13.5h1.5" />
    </svg>
  );
}

function UsbIcon() {
  return (
    <svg viewBox="0 0 20 12" className="h-3 w-5" fill="none" stroke="#8b949e" strokeWidth="1.8" aria-hidden="true">
      <rect x="1" y="1" width="13" height="10" rx="1.5" />
      <path d="M14 4h5v4h-5M17 5v2" />
    </svg>
  );
}

const DRIVES = [
  { letter: "C", name: "Local Disk", type: "NVMe SSD · NTFS", used: "271.37 GB of 1 TB", free: "752.63 GB free", percent: 26.5, icon: <SsdIcon /> },
  { letter: "D", name: "Data", type: "Hard disk · NTFS", used: "1.52 TB of 1.82 TB", free: "307.2 GB free", percent: 83.5, icon: <HddIcon /> },
  { letter: "E", name: "Games", type: "SSD · NTFS", used: "3.31 TB of 3.64 TB", free: "337.92 GB free", percent: 91, hot: true, icon: <SsdIcon /> },
  { letter: "F", name: "Backup", type: "USB · exFAT", used: "2.16 TB of 3.64 TB", free: "1.48 TB free", percent: 59.3, removable: true, icon: <UsbIcon /> },
  { letter: "G", name: "USB Drive", type: "USB · FAT32", used: "12.4 GB of 57.6 GB", free: "45.2 GB free", percent: 21.5, removable: true, icon: <UsbIcon /> },
];

function Drives() {
  return (
    <section className="mx-[21px] border-b-2 border-[#2b3139]">
      <h2 className="pt-[18px] text-[22px] font-semibold leading-7 text-[#e6edf3]">Drives</h2>
      <p className="mt-0.5 text-lg leading-[30px] text-[#7d8590]">Click a drive to scan it.</p>
      <ul className="mt-[11px]">
        {DRIVES.map((d) => (
          <li key={d.letter}>
            <button className="flex h-[99px] w-full items-start pr-1.5 text-left">
              <span className="relative ml-1.5 mt-1 shrink-0">
                <span
                  className={`flex size-[60px] items-center justify-center rounded-xl border-2 bg-[#0d1117] text-xl font-bold text-white ${d.removable ? "border-dashed border-[#2b3139]" : "border-[#252b32]"}`}
                >
                  {d.letter}
                </span>
                <span className="absolute -bottom-[11px] -right-[11px] flex size-8 items-center justify-center rounded-full bg-[#161b22]">
                  {d.icon}
                </span>
              </span>
              <span className="ml-[27px] flex min-w-0 flex-1 flex-col">
                <span className="flex items-center justify-between leading-[30px]">
                  <span className="text-[21px] font-semibold text-white">{d.name}</span>
                  <span className="pt-0.5 text-lg leading-7 text-[#7d8590]">{d.type}</span>
                </span>
                <span className="mt-[7px] h-2 overflow-hidden rounded bg-[#21262d]">
                  <span
                    className={`block h-full rounded ${d.hot ? "bg-[#db7b3b]" : "bg-[#dfa92d]"}`}
                    style={{ width: `${d.percent}%` }}
                  />
                </span>
                <span className="mt-1.5 flex justify-between text-lg leading-[26px]">
                  <span className="text-[#7d8590]">{d.used}</span>
                  <span className="font-semibold text-white">{d.free}</span>
                </span>
              </span>
            </button>
          </li>
        ))}
      </ul>
    </section>
  );
}

const TABS = [
  { label: "Files", icon: <FileText size={21} />, active: true },
  { label: "Folders", icon: <Folder size={21} /> },
  { label: "Types", icon: <Layers size={21} /> },
  { label: "Changes", icon: <RefreshCcw size={21} /> },
];

const LEGEND = [
  ["Game data", "bg-[#a5b36f]"],
  ["Video", "bg-[#c87c7b]"],
  ["System", "bg-[#8fa3b8]"],
  ["Disk images", "bg-[#808fd3]"],
  ["Programs", "bg-[#a487c6]"],
];

const SYSTEM = "bg-[#8598ad]";
const GAME = "bg-[#98a766]";
const IMAGE = "bg-[#7583c2]";

const FILES = [
  { name: "pagefile.sys", path: "C:\\", share: "5.7%", width: 100, size: "16 GB", dot: "bg-[#8fa3b8]", bar: SYSTEM },
  { name: "hiberfil.sys", path: "C:\\", share: "4.5%", width: 79, size: "12.7 GB", dot: "bg-[#8fa3b8]", bar: SYSTEM },
  { name: "streaming.pak", path: "C:\\Games Library\\common\\...", share: "3.5%", width: 61, size: "9.8 GB", dot: "bg-[#a5b36f]", bar: GAME },
  { name: "world.pak", path: "C:\\Games Library\\common\\...", share: "2.8%", width: 49, size: "7.9 GB", dot: "bg-[#a5b36f]", bar: GAME },
  { name: "linux_image.iso", path: "C:\\Users\\User\\Downloads", share: "2.0%", width: 36, size: "5.7 GB", dot: "bg-[#808fd3]", bar: IMAGE },
  { name: "os_installer.iso", path: "C:\\Users\\User\\Downloads", share: "1.9%", width: 33, size: "5.4 GB", dot: "bg-[#808fd3]", bar: IMAGE },
];

function LargestItems() {
  return (
    <section className="relative min-h-0 flex-1 overflow-hidden pl-[21px] pr-[15px]">
      <h2 className="pt-[11px] text-[22px] font-semibold leading-7 text-[#e6edf3]">Largest items</h2>
      <div className="mt-2.5 flex gap-[9px]">
        {TABS.map((t) => (
          <button
            key={t.label}
            className={`flex h-11 items-center gap-[13px] whitespace-nowrap rounded-[10px] border-2 pl-[15px] pr-[18px] text-[19px] ${
              t.active
                ? "border-[#f5b82e] bg-[#211d15] font-semibold text-[#f5b82e]"
                : "border-[#2b3139] bg-[#0d1117] text-[#7d8590]"
            }`}
          >
            {t.icon}
            {t.label}
          </button>
        ))}
      </div>
      <p className="mt-1.5 text-lg leading-7 text-[#7d8590]">Largest files in C:\</p>
      <ul className="ml-[3px] mt-1 grid grid-cols-[182px_182px_182px] text-lg leading-[26px] text-[#7d8590]">
        {LEGEND.map(([label, color]) => (
          <li key={label} className="flex items-center gap-[9px]">
            <span className={`size-[15px] rounded-[3px] ${color}`} />
            {label}
          </li>
        ))}
      </ul>
      <table className="ml-[3px] mt-3 w-[547px] table-fixed border-collapse whitespace-nowrap">
        <colgroup>
          <col className="w-[33px]" />
          <col />
          <col className="w-[57px]" />
          <col className="w-[88px]" />
          <col className="w-[52px]" />
          <col className="w-[61px]" />
        </colgroup>
        <thead>
          <tr className="h-9 border-b-2 border-[#2b3139] text-[17px] text-[#7d8590]">
            <td />
            <th colSpan={2} className="text-left font-semibold">
              FILE
            </th>
            <th colSpan={2} className="text-left font-semibold">
              SHARE OF THE...
            </th>
            <th className="text-right font-semibold">SIZE</th>
          </tr>
        </thead>
        <tbody>
          {FILES.map((f, i) => (
            <tr key={i} className="h-[62px]">
              <td className="pt-1.5">
                <span className={`block size-[15px] rounded-[3px] ${f.dot}`} />
              </td>
              <td className="pt-1.5">
                <div className="text-[19px] font-semibold leading-6 text-white">{f.name}</div>
                <div className="text-base leading-5 text-[#7d8590]">{f.path}</div>
              </td>
              <td colSpan={2} className="pt-1.5">
                <div className="flex items-center justify-between pr-0.5">
                  <span className="h-[9px] w-[81px] overflow-hidden rounded-full bg-[#21262d]">
                    <span className={`block h-full rounded-full ${f.bar}`} style={{ width: `${f.width}%` }} />
                  </span>
                  <span className="text-base text-[#7d8590]">{f.share}</span>
                </div>
              </td>
              <td colSpan={2} className="pt-1.5 text-right text-xl font-bold text-white">
                {f.size}
              </td>
            </tr>
          ))}
        </tbody>
      </table>
      <span className="absolute right-[3px] top-[158px] h-[48px] w-[3px] bg-[#8f9296]" />
    </section>
  );
}

function StatusBar() {
  return (
    <footer className="flex h-11 shrink-0 items-center border-t-2 border-[#2b3139] bg-[#161b22] pl-[18px] pr-[19px] text-[19px] text-[#7d8590]">
      <span className="whitespace-pre text-xl text-[#e6edf3]">
        {"Opened the scan from 13 hours ago: 2,133 files · 280.13 GB. F5 rescans.  Compared with yesterday."}
      </span>
      <Divider className="ml-auto mr-6 h-6" />
      <span className="font-semibold text-[#e6edf3]">C:</span>
      <span className="ml-3.5 h-2 w-[165px] overflow-hidden rounded bg-[#21262d]">
        <span className="block h-full rounded bg-[#dfa92d]" style={{ width: "27%" }} />
      </span>
      <span className="ml-3.5">271.37 GB of 1 TB</span>
      <Divider className="mx-6 h-6" />
      <span>2,133 files</span>
      <Divider className="mx-6 h-6" />
      <span className="font-semibold text-[#e6edf3]">RAM</span>
      <span className="ml-3 h-2 w-[165px] rounded bg-[#21262d]" />
      <span className="ml-3.5">111.69 MB</span>
    </footer>
  );
}

export default function App() {
  return (
    <div className="h-screen bg-[#1b1416] font-['Inter',sans-serif]">
      <div className="flex h-full flex-col overflow-hidden rounded-xl border-2 border-[#30363d] bg-[#0d1117]">
        <TitleBar />
        <Toolbar />
        <PathBar />
        <div className="flex min-h-0 flex-1">
          <aside className="flex w-[597px] shrink-0 flex-col overflow-hidden border-r-2 border-[#2b3139] bg-[#161b22]">
            <Drives />
            <LargestItems />
          </aside>
          <main className="flex min-w-0 flex-1 p-[3px] font-['Open_Sans',sans-serif]">{treemap}</main>
        </div>
        <StatusBar />
      </div>
    </div>
  );
}
